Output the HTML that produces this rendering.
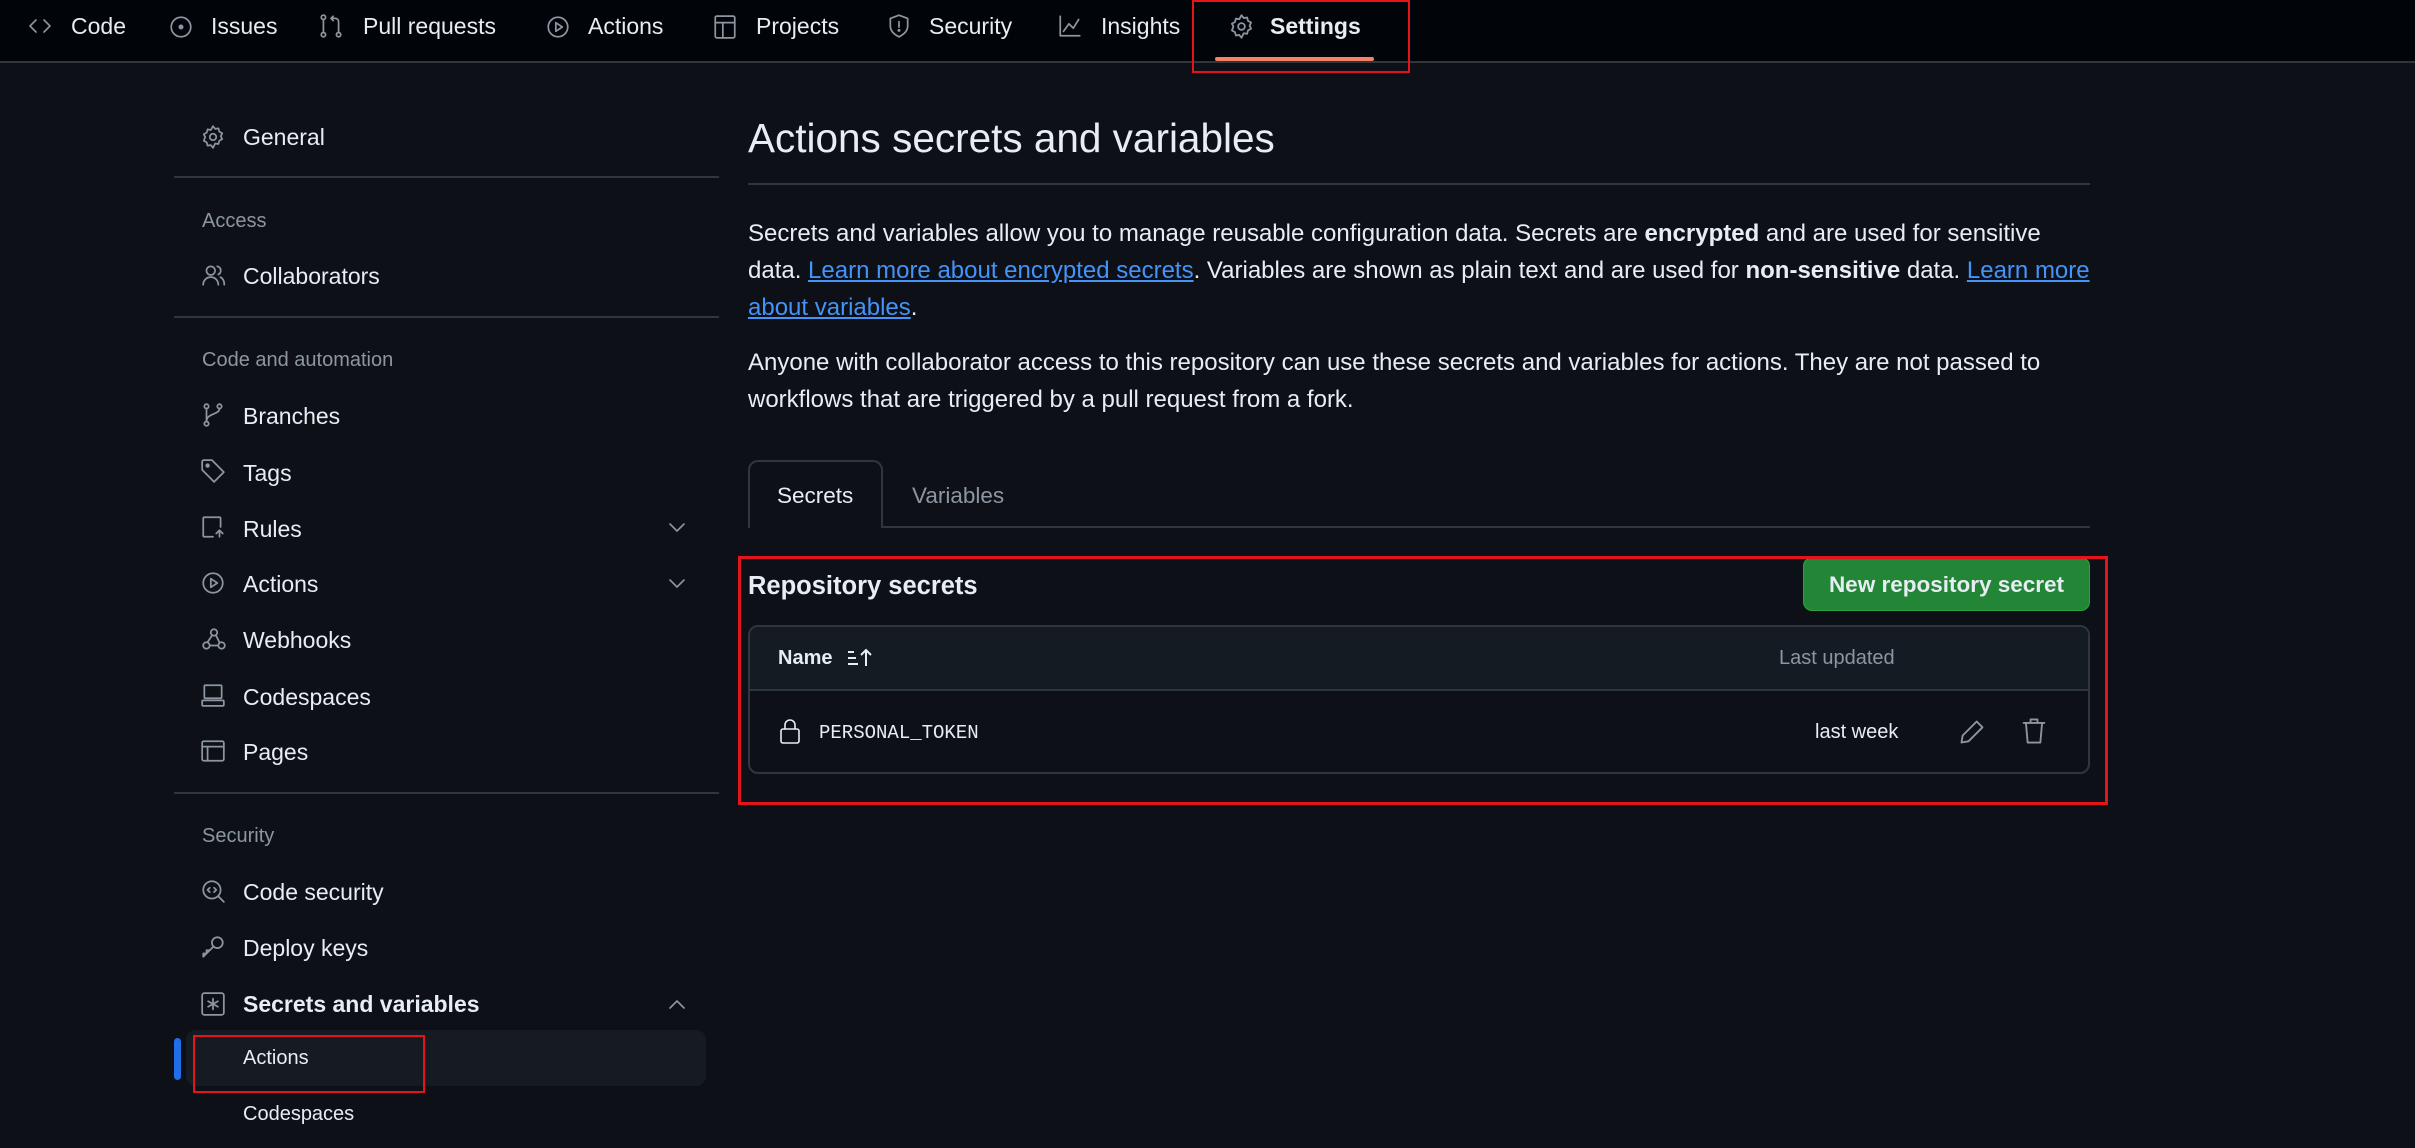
<!DOCTYPE html>
<html><head><meta charset="utf-8">
<style>
*{box-sizing:border-box;margin:0;padding:0}
body{width:2415px;height:1148px;background:#0d1117;color:#e6edf3;font-family:"Liberation Sans",sans-serif;position:relative;overflow:hidden}
.abs{position:absolute;white-space:nowrap}
.nav{position:absolute;left:0;top:0;width:2415px;height:63px;background:#010409;border-bottom:2px solid #30363d}
.ni{position:absolute;top:12px;font-size:23px;line-height:28px;color:#e6edf3}
.ico{position:absolute;fill:none;stroke:#8d96a0;stroke-width:1.6;stroke-linecap:round;stroke-linejoin:round}
.side{font-size:23px;line-height:30px}
.hd{font-size:20px;color:#8d96a0}
.div{position:absolute;height:2px;background:#30363d}
a{color:#4493f8;text-decoration:underline}
.p{position:absolute;left:748px;font-size:24px;line-height:37px;width:1400px}
</style></head><body>
<div class="nav">
 <svg class="ico" style="left:28px;top:14px" width="24" height="24" viewBox="0 0 24 24"><path d="M8 6 2 12l6 6M16 6l6 6-6 6"/></svg>
 <div class="ni" style="left:71px">Code</div>
 <svg class="ico" style="left:168px;top:14px" width="26" height="26" viewBox="0 0 24 24"><circle cx="12" cy="12" r="9"/><circle cx="12" cy="12" r="1.5" fill="#8d96a0"/></svg>
 <div class="ni" style="left:211px">Issues</div>
 <svg class="ico" style="left:318px;top:12px" width="26" height="28" viewBox="0 0 24 24"><circle cx="5" cy="4" r="2"/><circle cx="5" cy="20" r="2"/><circle cx="19" cy="20" r="2"/><path d="M5 6v12M19 18V8a3 3 0 0 0-3-3h-4m2-2-2 2 2 2"/></svg>
 <div class="ni" style="left:363px">Pull requests</div>
 <svg class="ico" style="left:545px;top:14px" width="26" height="26" viewBox="0 0 24 24"><circle cx="12" cy="12" r="9"/><path d="M10 8v8l6-4z"/></svg>
 <div class="ni" style="left:588px">Actions</div>
 <svg class="ico" style="left:712px;top:13px" width="26" height="28" viewBox="0 0 24 24"><rect x="3" y="2" width="18" height="20" rx="1.5"/><path d="M3 8h18M10 8v14"/></svg>
 <div class="ni" style="left:756px">Projects</div>
 <svg class="ico" style="left:886px;top:12px" width="26" height="28" viewBox="0 0 24 24"><path d="M12 2 4 5v7c0 5 4 8 8 10 4-2 8-5 8-10V5z"/><path d="M12 8v5"/><circle cx="12" cy="16" r=".6" fill="#8d96a0"/></svg>
 <div class="ni" style="left:929px">Security</div>
 <svg class="ico" style="left:1057px;top:13px" width="26" height="26" viewBox="0 0 24 24"><path d="M3 3v18h18M6 17l5-7 4 4 5-8"/></svg>
 <div class="ni" style="left:1101px">Insights</div>
 <svg class="ico" style="left:1228px;top:13px" width="27" height="27" viewBox="0 0 24 24"><path d="M12 2l2 2.5 3-.5.8 3 2.7 1.5-1.3 2.8 1.3 2.7-2.7 1.5-.8 3-3-.5L12 22l-2-2.5-3 .5-.8-3-2.7-1.5L4.8 12 3.5 9.5 6.2 8 7 5l3 .5z"/><circle cx="12" cy="12" r="3"/></svg>
 <div class="ni" style="left:1270px;font-weight:bold">Settings</div>
 <div class="abs" style="left:1215px;top:57px;width:159px;height:4px;background:#f78166;border-radius:2px"></div>
</div>
<div class="abs" style="left:1192px;top:0;width:218px;height:73px;border:2px solid #e5141b"></div>

<!-- sidebar -->
<svg class="ico" style="left:200px;top:124px" width="26" height="26" viewBox="0 0 24 24"><path d="M12 2l2 2.5 3-.5.8 3 2.7 1.5-1.3 2.8 1.3 2.7-2.7 1.5-.8 3-3-.5L12 22l-2-2.5-3 .5-.8-3-2.7-1.5L4.8 12 3.5 9.5 6.2 8 7 5l3 .5z"/><circle cx="12" cy="12" r="3"/></svg>
<div class="abs side" style="left:243px;top:122px">General</div>
<div class="div" style="left:174px;top:176px;width:545px"></div>
<div class="abs hd" style="left:202px;top:210px">Access</div>
<svg class="ico" style="left:200px;top:262px" width="28" height="26" viewBox="0 0 24 24"><circle cx="9" cy="8" r="4"/><path d="M2 21c0-4 3-7 7-7s7 3 7 7M15 4a4 4 0 0 1 1 7.5M18 14c2 1 3.5 3.5 3.5 7"/></svg>
<div class="abs side" style="left:243px;top:261px">Collaborators</div>
<div class="div" style="left:174px;top:316px;width:545px"></div>
<div class="abs hd" style="left:202px;top:349px">Code and automation</div>
<svg class="ico" style="left:200px;top:402px" width="26" height="26" viewBox="0 0 24 24"><circle cx="6" cy="4" r="2"/><circle cx="6" cy="20" r="2"/><circle cx="18" cy="4" r="2"/><path d="M6 6v12M18 6c0 6-12 4-12 12"/></svg>
<div class="abs side" style="left:243px;top:401px">Branches</div>
<svg class="ico" style="left:200px;top:458px" width="26" height="26" viewBox="0 0 24 24"><path d="M2 3v8l11 11 9-9L11 2H3z"/><circle cx="7" cy="7" r="1.2" fill="#8d96a0"/></svg>
<div class="abs side" style="left:243px;top:458px">Tags</div>
<svg class="ico" style="left:200px;top:514px" width="26" height="26" viewBox="0 0 24 24"><path d="M12 21H4a1 1 0 0 1-1-1V4a1 1 0 0 1 1-1h14a1 1 0 0 1 1 1v8M18 21v-6m-3 3 3-3 3 3"/></svg>
<div class="abs side" style="left:243px;top:514px">Rules</div>
<svg class="ico" style="left:666px;top:520px" width="22" height="16" viewBox="0 0 22 16"><path d="M4 4l7 7 7-7"/></svg>
<svg class="ico" style="left:200px;top:570px" width="26" height="26" viewBox="0 0 24 24"><circle cx="12" cy="12" r="9"/><path d="M10 8v8l6-4z"/></svg>
<div class="abs side" style="left:243px;top:569px">Actions</div>
<svg class="ico" style="left:666px;top:576px" width="22" height="16" viewBox="0 0 22 16"><path d="M4 4l7 7 7-7"/></svg>
<svg class="ico" style="left:200px;top:626px" width="28" height="26" viewBox="0 0 24 24"><circle cx="12" cy="6" r="3"/><circle cx="5" cy="18" r="3"/><circle cx="19" cy="18" r="3"/><path d="M10 9l-4 6M8 18h8M14 9l3 6"/></svg>
<div class="abs side" style="left:243px;top:625px">Webhooks</div>
<svg class="ico" style="left:200px;top:682px" width="26" height="26" viewBox="0 0 24 24"><rect x="4" y="3" width="16" height="12" rx="1"/><rect x="2" y="17" width="20" height="5" rx="1"/></svg>
<div class="abs side" style="left:243px;top:682px">Codespaces</div>
<svg class="ico" style="left:200px;top:738px" width="26" height="26" viewBox="0 0 24 24"><rect x="2" y="3" width="20" height="18" rx="1.5"/><path d="M2 8h20M7 8v13"/></svg>
<div class="abs side" style="left:243px;top:737px">Pages</div>
<div class="div" style="left:174px;top:792px;width:545px"></div>
<div class="abs hd" style="left:202px;top:825px">Security</div>
<svg class="ico" style="left:200px;top:878px" width="26" height="26" viewBox="0 0 24 24"><circle cx="11" cy="11" r="8"/><path d="M17 17l5 5M9 9l-2 2 2 2M13 9l2 2-2 2"/></svg>
<div class="abs side" style="left:243px;top:877px">Code security</div>
<svg class="ico" style="left:200px;top:934px" width="26" height="26" viewBox="0 0 24 24"><circle cx="16" cy="8" r="5"/><path d="M12.5 11.5 3 21v-3h3v-3h3l3-3"/></svg>
<div class="abs side" style="left:243px;top:933px">Deploy keys</div>
<svg class="ico" style="left:200px;top:991px" width="26" height="26" viewBox="0 0 24 24"><rect x="2" y="2" width="20" height="20" rx="2"/><path d="M12 7v10M7.5 9.5l9 5M16.5 9.5l-9 5"/></svg>
<div class="abs side" style="left:243px;top:989px;font-weight:bold">Secrets and variables</div>
<svg class="ico" style="left:666px;top:996px" width="22" height="16" viewBox="0 0 22 16"><path d="M4 12l7-7 7 7"/></svg>
<div class="abs" style="left:186px;top:1030px;width:520px;height:56px;background:#161b22;border-radius:10px"></div>
<div class="abs" style="left:174px;top:1038px;width:7px;height:42px;background:#1f6feb;border-radius:4px"></div>
<div class="abs" style="left:243px;top:1047px;font-size:20px">Actions</div>
<div class="abs" style="left:193px;top:1035px;width:232px;height:58px;border:2px solid #e5141b"></div>
<div class="abs" style="left:243px;top:1103px;font-size:20px">Codespaces</div>

<!-- main -->
<div class="abs" style="left:748px;top:115px;font-size:40.5px">Actions secrets and variables</div>
<div class="div" style="left:748px;top:183px;width:1342px;height:1.5px"></div>
<div class="p" style="top:215px">Secrets and variables allow you to manage reusable configuration data. Secrets are <b>encrypted</b> and are used for sensitive<br>data. <a>Learn more about encrypted secrets</a>. Variables are shown as plain text and are used for <b>non-sensitive</b> data. <a>Learn more</a><br><a>about variables</a>.</div>
<div class="p" style="top:344px">Anyone with collaborator access to this repository can use these secrets and variables for actions. They are not passed to<br>workflows that are triggered by a pull request from a fork.</div>

<div class="div" style="left:748px;top:526px;width:1342px"></div>
<div class="abs" style="left:748px;top:460px;width:135px;height:68px;border:2px solid #30363d;border-bottom:none;border-radius:10px 10px 0 0;background:#0d1117"></div>
<div class="abs" style="left:777px;top:483px;font-size:22.5px">Secrets</div>
<div class="abs" style="left:912px;top:483px;font-size:22.5px;color:#8d96a0">Variables</div>

<div class="abs" style="left:748px;top:572px;font-size:25.5px;font-weight:bold">Repository secrets</div>
<div class="abs" style="left:1803px;top:557px;width:287px;height:54px;background:#238636;border-radius:9px;border:1px solid #2ea043;font-size:22.5px;font-weight:bold;text-align:center;line-height:54px">New repository secret</div>
<div class="abs" style="left:748px;top:625px;width:1342px;height:149px;border:2px solid #30363d;border-radius:10px;overflow:hidden">
 <div style="height:64px;background:#151b23;border-bottom:2px solid #30363d"></div>
</div>
<div class="abs" style="left:778px;top:647px;font-size:20px;font-weight:bold">Name</div>
<svg class="abs" style="left:846px;top:646px" width="30" height="24" viewBox="0 0 30 24"><path d="M2 6h6M2 12h8M2 18h10M20 20V4m-5 5 5-5 5 5" stroke="#e6edf3" stroke-width="2" fill="none"/></svg>
<div class="abs" style="left:1779px;top:647px;font-size:20px;color:#8d96a0">Last updated</div>
<svg class="ico" style="left:778px;top:717px;stroke:#e6edf3" width="24" height="28" viewBox="0 0 24 28"><rect x="3" y="12" width="18" height="14" rx="2"/><path d="M7 12V8a5 5 0 0 1 10 0v4"/></svg>
<div class="abs" style="left:819px;top:722px;font-family:'Liberation Mono',monospace;font-size:19px">PERSONAL_TOKEN</div>
<div class="abs" style="left:1815px;top:721px;font-size:20px">last week</div>
<svg class="ico" style="left:1958px;top:718px" width="28" height="28" viewBox="0 0 24 24"><path d="M16 3l5 5L9 20l-6 1 1-6z"/></svg>
<svg class="ico" style="left:2020px;top:716px" width="28" height="30" viewBox="0 0 24 26"><path d="M3 6h18M9 6V3h6v3M5 6l1.5 17h11L19 6"/></svg>
<div class="abs" style="left:738px;top:556px;width:1370px;height:249px;border:3px solid #e5141b"></div>
</body></html>
